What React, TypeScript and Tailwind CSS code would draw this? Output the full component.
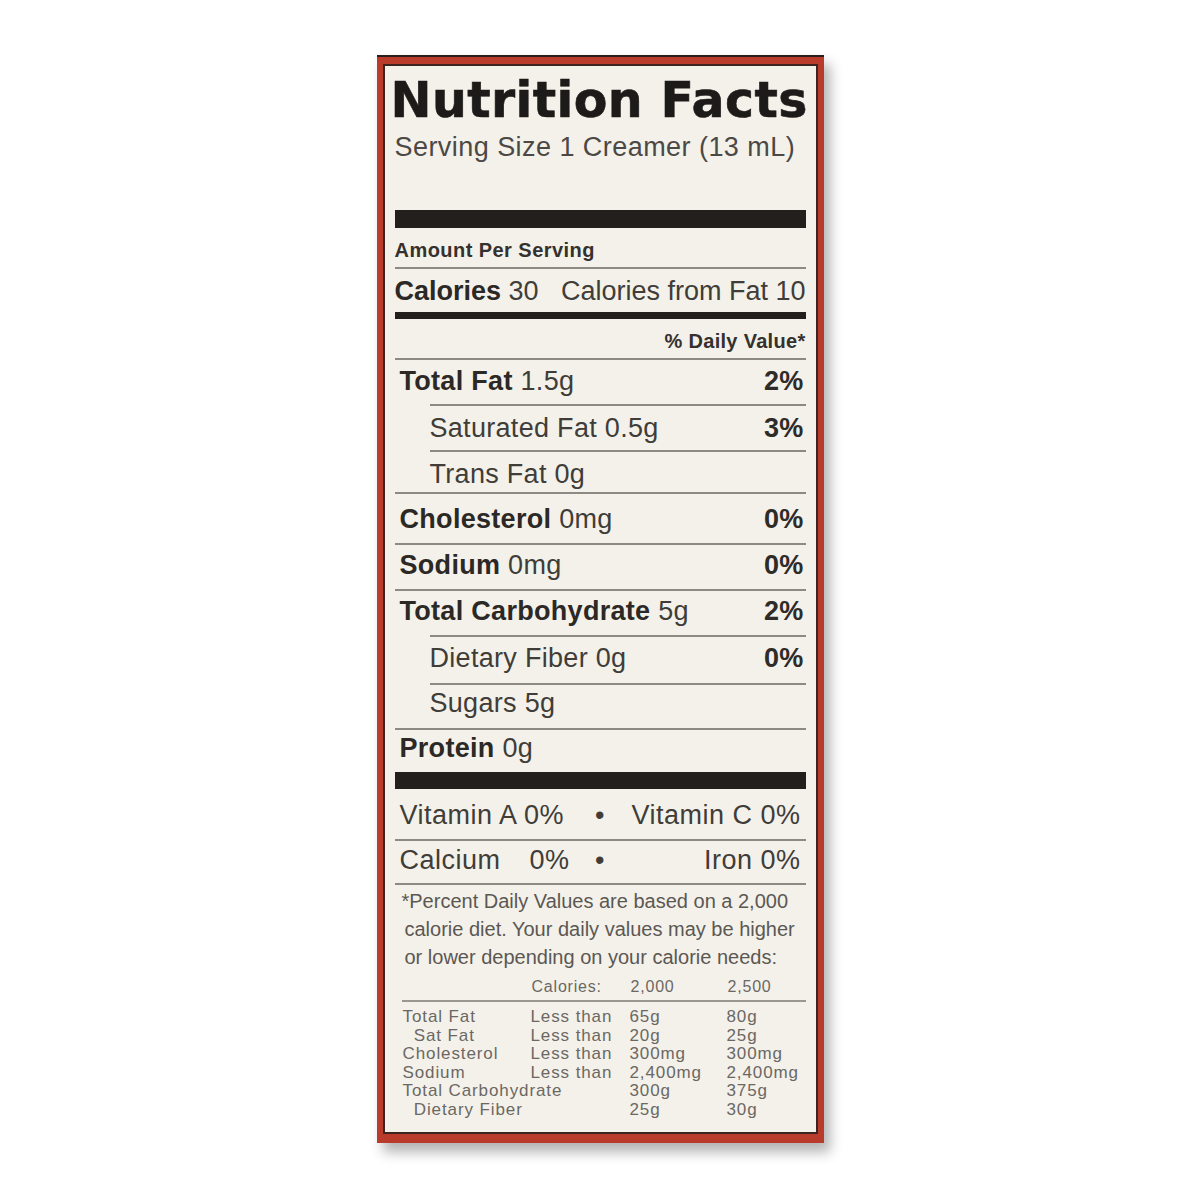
const sans = "font-['Liberation_Sans',Arial,sans-serif]";

type Nutrient = {
  name: string;
  amount: string;
  dv?: string;
  indent: boolean;
  box: string;
  line: "full" | "indent" | "none";
};

const nutrients: Nutrient[] = [
  { name: "Total Fat", amount: "1.5g", dv: "2%", indent: false, box: "pt-[6px] h-[44px]", line: "indent" },
  { name: "Saturated Fat", amount: "0.5g", dv: "3%", indent: true, box: "pt-[7px] h-[44px]", line: "indent" },
  { name: "Trans Fat", amount: "0g", indent: true, box: "pt-[7px] h-[40px]", line: "full" },
  { name: "Cholesterol", amount: "0mg", dv: "0%", indent: false, box: "pt-[10px] h-[49px]", line: "full" },
  { name: "Sodium", amount: "0mg", dv: "0%", indent: false, box: "pt-[5px] h-[44px]", line: "full" },
  { name: "Total Carbohydrate", amount: "5g", dv: "2%", indent: false, box: "pt-[5px] h-[44px]", line: "indent" },
  { name: "Dietary Fiber", amount: "0g", dv: "0%", indent: true, box: "pt-[6px] h-[46px]", line: "indent" },
  { name: "Sugars", amount: "5g", indent: true, box: "pt-[3px] h-[43px]", line: "full" },
  { name: "Protein", amount: "0g", indent: false, box: "pt-[3px] h-[42px]", line: "none" },
];

const daily = [
  ["Total Fat", "Less than", "65g", "80g"],
  ["\u00a0\u00a0Sat Fat", "Less than", "20g", "25g"],
  ["Cholesterol", "Less than", "300mg", "300mg"],
  ["Sodium", "Less than", "2,400mg", "2,400mg"],
  ["Total Carbohydrate", "", "300g", "375g"],
  ["\u00a0\u00a0Dietary Fiber", "", "25g", "30g"],
];

function Rule({ indent }: { indent?: boolean }) {
  return <div className={`h-[2px] bg-[#8d8a85] ${indent ? "ml-[35px]" : ""}`} />;
}

function NutrientRow({ n }: { n: Nutrient }) {
  // sub rows (indented) are all regular weight
  const nameCls = n.indent ? "" : "font-bold text-[#2b2825]";
  return (
    <>
      <div
        className={`flex justify-between text-[27px] leading-[30px] tracking-[0.3px] text-[#403d39] pr-[2px] ${n.box} ${
          n.indent ? "pl-[35px]" : "pl-[5px]"
        }`}
      >
        <span className="whitespace-nowrap">
          <span className={nameCls}>{n.name}</span> {n.amount}
        </span>
        {n.dv && <span className="font-bold text-[#2e2b28]">{n.dv}</span>}
      </div>
      {n.line !== "none" && <Rule indent={n.line === "indent"} />}
    </>
  );
}

export default function App() {
  return (
    <div className={`min-h-screen bg-white pt-[55px] ${sans}`}>
      <div className="mx-auto w-[447px] bg-[#b93b2b] border-t-2 border-t-[#2a1e1a] pt-[7px] px-[6px] pb-[9px] shadow-[6px_9px_12px_rgba(0,0,0,0.3)]">
        <div className="h-[1070px] border-2 border-[#3d2420] bg-[#f4f1ea] px-[10px] pt-[10px]">
          <div className="-ml-[4px] h-[50px] whitespace-nowrap font-['DejaVu_Sans',sans-serif] text-[49px] font-bold leading-[50px] tracking-[0.4px] text-[#1d1b19] [-webkit-text-stroke:0.6px_#1d1b19]">
            Nutrition Facts
          </div>
          <div className="pt-[6px] h-[36px] whitespace-nowrap text-[27px] leading-[30px] tracking-[0.45px] text-[#4b4845]">
            Serving Size 1 Creamer (13 mL)
          </div>

          <div className="mt-[48px] h-[18px] bg-[#231f1c]" />

          <div className="pt-[10px] h-[39px] text-[20px] font-bold leading-[24px] tracking-[0.45px] text-[#34312e]">
            Amount Per Serving
          </div>
          <Rule />
          <div className="flex justify-between pt-[7px] h-[43px] whitespace-nowrap text-[27px] leading-[30px] text-[#403d39]">
            <span>
              <span className="font-bold text-[#2b2825]">Calories</span> 30
            </span>
            <span>Calories from Fat 10</span>
          </div>
          <div className="h-[7px] bg-[#231f1c]" />
          <div className="pt-[10px] h-[39px] text-right text-[20px] font-bold leading-[24px] tracking-[0.3px] text-[#34312e]">
            % Daily Value*
          </div>
          <Rule />

          {nutrients.map((n) => (
            <NutrientRow key={n.name} n={n} />
          ))}

          <div className="h-[17px] bg-[#231f1c]" />

          <div className="grid grid-cols-[1fr_auto_1fr] pt-[11px] h-[50px] px-[5px] whitespace-nowrap text-[27px] leading-[30px] tracking-[0.5px] text-[#403d39]">
            <span>Vitamin A 0%</span>
            <span>•</span>
            <span className="text-right">Vitamin C 0%</span>
          </div>
          <Rule />
          <div className="grid grid-cols-[1fr_auto_1fr] pt-[4px] h-[42px] px-[5px] whitespace-nowrap text-[27px] leading-[30px] tracking-[0.5px] text-[#403d39]">
            <span>
              Calcium<span className="ml-[29px]">0%</span>
            </span>
            <span>•</span>
            <span className="text-right">Iron 0%</span>
          </div>
          <Rule />

          <div className="pt-[2px] h-[86px] pl-[7px] whitespace-nowrap text-[20px] leading-[28px] text-[#5b5854]">
            <div>*Percent Daily Values are based on a 2,000</div>
            <div className="pl-[3px]">calorie diet. Your daily values may be higher</div>
            <div className="pl-[3px]">or lower depending on your calorie needs:</div>
          </div>

          <div className="grid grid-cols-[129px_99px_97px_1fr] pl-[8px] pt-[6px] h-[29px] text-[16px] leading-[20px] tracking-[0.8px] text-[#6b6864]">
            <span />
            <span>Calories:</span>
            <span>2,000</span>
            <span>2,500</span>
          </div>
          <div className="ml-[7px] h-[2px] bg-[#9a9792]" />

          <div className="pt-[6px] pl-[8px] text-[17px] leading-[18.6px] tracking-[0.9px] text-[#6b6864]">
            {daily.map((r) => (
              <div key={r[0]} className="grid grid-cols-[128px_99px_97px_1fr] whitespace-nowrap">
                <span>{r[0]}</span>
                <span>{r[1]}</span>
                <span>{r[2]}</span>
                <span>{r[3]}</span>
              </div>
            ))}
          </div>
        </div>
      </div>
    </div>
  );
}
